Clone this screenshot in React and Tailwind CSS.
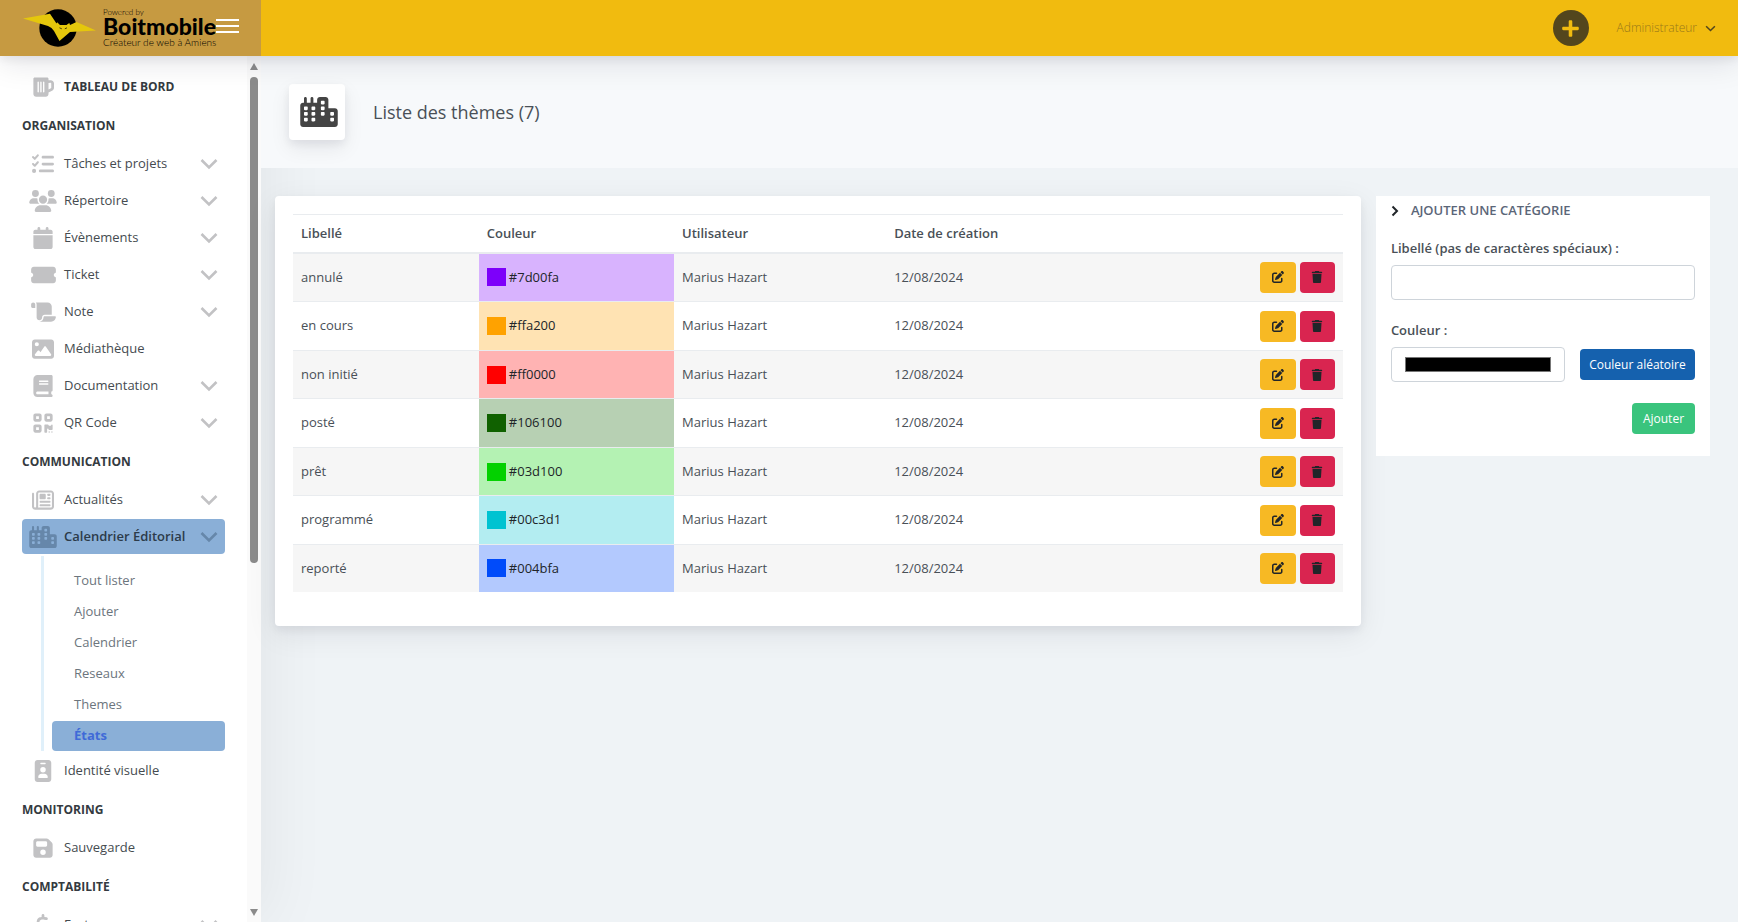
import React from "react";
import {
  FaBeerMugEmpty, FaListCheck, FaUsers, FaCalendar, FaTicketSimple, FaScroll, FaImage, FaBook,
  FaQrcode, FaRegNewspaper, FaCity, FaIdBadge, FaFloppyDisk, FaDollarSign, FaTrash, FaPenToSquare,
} from "react-icons/fa6";
import { FaPlus } from "react-icons/fa";

const sections = [
  {
    title: "Organisation",
    items: [
      { label: "Tâches et projets", icon: FaListCheck, more: true },
      { label: "Répertoire", icon: FaUsers, iconSize: "h-[22px] w-7", more: true },
      { label: "Évènements", icon: FaCalendar, more: true },
      { label: "Ticket", icon: FaTicketSimple, iconSize: "h-[22px] w-[25px]", more: true },
      { label: "Note", icon: FaScroll, iconSize: "h-[22px] w-[25px]", more: true },
      { label: "Médiathèque", icon: FaImage },
      { label: "Documentation", icon: FaBook, more: true },
      { label: "QR Code", icon: FaQrcode, more: true },
    ],
  },
  {
    title: "Communication",
    items: [
      { label: "Actualités", icon: FaRegNewspaper, more: true },
      {
        label: "Calendrier Éditorial",
        icon: FaCity,
        iconSize: "h-[22px] w-7",
        more: true,
        active: true,
        children: ["Tout lister", "Ajouter", "Calendrier", "Reseaux", "Themes", "États"],
      },
      { label: "Identité visuelle", icon: FaIdBadge },
    ],
  },
  { title: "Monitoring", items: [{ label: "Sauvegarde", icon: FaFloppyDisk }] },
  { title: "Comptabilité", items: [{ label: "Facture", icon: FaDollarSign, more: true }] },
];

const themes = [
  { label: "annulé", color: "#7d00fa", tint: "#d8b3fe" },
  { label: "en cours", color: "#ffa200", tint: "#ffe3b3" },
  { label: "non initié", color: "#ff0000", tint: "#ffb3b3" },
  { label: "posté", color: "#106100", tint: "#b7d0b3" },
  { label: "prêt", color: "#03d100", tint: "#b4f2b3" },
  { label: "programmé", color: "#00c3d1", tint: "#b3edf1" },
  { label: "reporté", color: "#004bfa", tint: "#b3c9fe" },
];

function Chevron({ className }) {
  return (
    <svg viewBox="0 0 18 12" fill="none" stroke="currentColor" strokeWidth="2.6" className={className} aria-hidden="true">
      <path d="M1.5 2 9 9.5 16.5 2" />
    </svg>
  );
}

function Logo() {
  return (
    <a href="#" className="flex items-center text-black">
      <svg viewBox="0 0 74 40" className="h-10 w-[74px] shrink-0" aria-hidden="true">
        <circle cx="35" cy="20" r="18.7" fill="#000" />
        <path
          fill="#e5c70c"
          d="M0 10.500 27 5.700 33.500 15.500 34.200 14.300 37 17H43.500L46.300 15 47 17 53.500 14 73 22.500 47 24 36.500 33 31 23Q29 19.500 25 18Z"
        />
        <path d="M36.500 19.800 38.800 20.800M41.800 20.800 44 19.800" stroke="#3a3205" strokeWidth="0.9" />
      </svg>
      <span className="ml-[6px] flex flex-col whitespace-nowrap font-['Lato',sans-serif]">
        <span className="text-[8px] leading-[8px] font-light">Powered by</span>
        <span className="text-[23px] leading-5 font-black">Boitmobile</span>
        <span className="text-[10px] leading-3 font-light">Créateur de web à Amiens</span>
      </span>
    </a>
  );
}

function NavItem({ item }) {
  const Icon = item.icon;
  return (
    <li>
      <a
        href="#"
        className={
          "flex h-[35px] items-center rounded-[4px] pr-[7px] pl-[6px] " +
          (item.active ? "bg-[#8aafd7] font-semibold text-[#2c3b4a]" : "text-[#454b50]")
        }
      >
        <span className={"flex w-[30px] shrink-0 justify-center " + (item.active ? "text-[#6687aa]" : "text-[#c2c2c4]")}>
          <Icon className={item.iconSize || "size-[22px]"} />
        </span>
        <span className="ml-[6px] flex-1 whitespace-nowrap">{item.label}</span>
        {item.more && <Chevron className={"h-3 w-[18px] shrink-0 " + (item.active ? "text-[#6687aa]" : "text-[#c2c2c4]")} />}
      </a>
      {item.children && (
        <ul className="mt-[2px] ml-[19px] flex flex-col gap-px border-l-[3px] border-[#e0f0fa] pt-[10px] pl-2">
          {item.children.map((c) => (
            <li key={c}>
              <a
                href="#"
                className={
                  "flex h-[30px] items-center rounded-[4px] pl-[22px] " +
                  (c === "États" ? "bg-[#8aafd7] font-bold text-[#3f6ad8]" : "text-[#6c757d]")
                }
              >
                {c}
              </a>
            </li>
          ))}
        </ul>
      )}
    </li>
  );
}

function Sidebar() {
  return (
    <aside className="flex w-[261px] shrink-0 bg-white shadow-[7px_0_60px_rgba(0,0,0,0.06)]">
      <nav className="min-w-0 flex-1 overflow-hidden pt-[13px] pr-[22px] pl-[22px]">
        <a href="#" className="mb-[2px] flex h-[35px] items-center pl-[6px] text-[12px] font-bold text-[#343a40] uppercase">
          <span className="flex w-[30px] justify-center text-[#c2c2c4]"><FaBeerMugEmpty className="size-[22px]" /></span>
          <span className="ml-[6px]">Tableau de bord</span>
        </a>
        {sections.map((s) => (
          <section key={s.title} className="mb-[2px]">
            <h2 className="flex h-10 items-center text-[12px] font-bold text-[#343a40] uppercase">{s.title}</h2>
            <ul className="flex flex-col gap-[2px]">
              {s.items.map((i) => <NavItem key={i.label} item={i} />)}
            </ul>
          </section>
        ))}
      </nav>
      <div className="flex w-[14px] shrink-0 flex-col items-center bg-[#fafafa] pt-[7px] pb-[6px]" aria-hidden="true">
        <svg viewBox="0 0 8 7" className="h-[7px] w-2"><path d="M4 0 8 7H0Z" fill="#8b8b8b" /></svg>
        <div className="mt-[7px] h-[486px] w-2 rounded-full bg-[#8b8b8b]" />
        <svg viewBox="0 0 8 7" className="mt-auto h-[7px] w-2"><path d="M4 7 8 0H0Z" fill="#8b8b8b" /></svg>
      </div>
    </aside>
  );
}

function ThemeTable() {
  return (
    <section className="rounded-[4px] bg-white px-[18px] pt-[18px] pb-[34px] shadow-[0_8px_30px_rgba(8,10,37,0.08),0_4px_8px_rgba(8,10,37,0.06)]">
      <table className="h-[378px] w-full table-fixed border-collapse text-left">
        <thead>
          <tr className="border-t border-b-2 border-t-[#e9ecef] border-b-[#e9ecef]">
            <th className="h-[38px] w-[17.7%] px-2 font-semibold">Libellé</th>
            <th className="w-[18.6%] px-2 font-semibold">Couleur</th>
            <th className="w-[20.2%] px-2 font-semibold">Utilisateur</th>
            <th className="px-2 font-semibold">Date de création</th>
            <th className="w-[10%]" aria-label="Actions" />
          </tr>
        </thead>
        <tbody>
          {themes.map((t) => (
            <tr key={t.color} className="border-b border-[#e9ecef] last:border-0 odd:bg-[#f6f6f6]">
              <td className="px-2">{t.label}</td>
              <td className="px-2 text-[#212529]" style={{ backgroundColor: t.tint }}>
                <span className="flex items-center gap-[3px]">
                  <span className="h-[18px] w-[19px]" style={{ backgroundColor: t.color }} />
                  {t.color}
                </span>
              </td>
              <td className="px-2">Marius Hazart</td>
              <td className="px-2">12/08/2024</td>
              <td className="pr-2">
                <span className="flex justify-end gap-1">
                  <button type="button" aria-label={"Modifier " + t.label} className="flex h-[31px] w-9 items-center justify-center rounded-[4px] bg-[#f7b924] text-[12px] text-[#212529]">
                    <FaPenToSquare />
                  </button>
                  <button type="button" aria-label={"Supprimer " + t.label} className="flex h-[31px] w-[35px] items-center justify-center rounded-[4px] bg-[#d92550] text-[12px] text-[#212529]">
                    <FaTrash />
                  </button>
                </span>
              </td>
            </tr>
          ))}
        </tbody>
      </table>
    </section>
  );
}

function AddForm() {
  return (
    <form className="bg-white px-[15px] pb-[22px]" onSubmit={(e) => e.preventDefault()}>
      <h2 className="flex h-[30px] items-center text-[13px] font-semibold text-[#5b6678] uppercase">
        <svg viewBox="0 0 8 12" fill="none" stroke="#212529" strokeWidth="2" className="h-3 w-2" aria-hidden="true">
          <path d="M1.500 1.500 6 6 1.500 10.500" />
        </svg>
        <span className="ml-3">Ajouter une catégorie</span>
      </h2>
      <label htmlFor="libelle" className="mt-3 block leading-5 font-semibold">Libellé (pas de caractères spéciaux) :</label>
      <input id="libelle" type="text" className="mt-[7px] block h-[35px] w-full rounded-[4px] border border-[#ced4da] px-3" />
      <label htmlFor="couleur" className="mt-5 block leading-5 font-semibold">Couleur :</label>
      <div className="mt-[7px] flex items-center justify-between gap-[15px]">
        <input
          id="couleur"
          type="color"
          defaultValue="#000000"
          className="h-[35px] min-w-0 flex-1 appearance-none rounded-[4px] border border-[#ced4da] bg-white px-[13px] py-[9px] [&::-webkit-color-swatch]:border-[#777] [&::-webkit-color-swatch-wrapper]:p-0"
        />
        <button type="button" className="h-[31px] w-[115px] rounded-[4px] bg-[#1561ae] text-[12px] whitespace-nowrap text-white">Couleur aléatoire</button>
      </div>
      <div className="mt-[21px] flex justify-end">
        <button type="submit" className="h-[31px] w-[63px] rounded-[4px] bg-[#3ac47d] text-[12px] text-white">Ajouter</button>
      </div>
    </form>
  );
}

export default function App() {
  return (
    <div className="flex h-screen flex-col overflow-hidden bg-[#eff3f6] font-['Open_Sans','Noto_Sans',sans-serif] text-[13px] text-[#495057]">
      <header className="relative z-10 flex h-14 shrink-0 bg-[#f1bb0f] shadow-[0_8px_30px_rgba(8,10,37,0.1),0_4px_8px_rgba(8,10,37,0.06)]">
        <div className="flex w-[261px] shrink-0 items-center justify-between bg-[#c69a41] pr-[22px] pl-[23px]">
          <Logo />
          <button type="button" aria-label="Menu" className="flex w-[23px] shrink-0 flex-col gap-1 pb-1">
            <span className="h-[2px] bg-white" />
            <span className="h-[2px] bg-white" />
            <span className="h-[2px] bg-white" />
          </button>
        </div>
        <div className="flex flex-1 items-center justify-end pr-[22px]">
          <button type="button" aria-label="Nouveau" className="flex size-9 items-center justify-center rounded-full bg-[#53461d] text-[19px] text-[#f1bb0f]">
            <FaPlus />
          </button>
          <button type="button" className="ml-7 flex items-center gap-2 text-[12px] font-light text-[#99791a]">
            Administrateur
            <Chevron className="h-[7px] w-[11px] text-[#53461d]" />
          </button>
        </div>
      </header>
      <div className="flex min-h-0 flex-1">
        <Sidebar />
        <main className="min-w-0 flex-1">
          <div className="flex h-28 items-center bg-[#f7f9fb] pl-7">
            <div className="flex size-14 items-center justify-center rounded-[4px] bg-white pl-1 text-[#444] shadow-[0_8px_20px_rgba(8,10,37,0.08),0_4px_8px_rgba(8,10,37,0.06)]">
              <FaCity className="h-[30px] w-[38px]" />
            </div>
            <h1 className="ml-7 text-[18px]">Liste des thèmes (7)</h1>
          </div>
          <div className="grid grid-cols-[13fr_4fr] items-start gap-[15px] pt-7 pr-7 pl-[14px]">
            <ThemeTable />
            <AddForm />
          </div>
        </main>
      </div>
    </div>
  );
}
